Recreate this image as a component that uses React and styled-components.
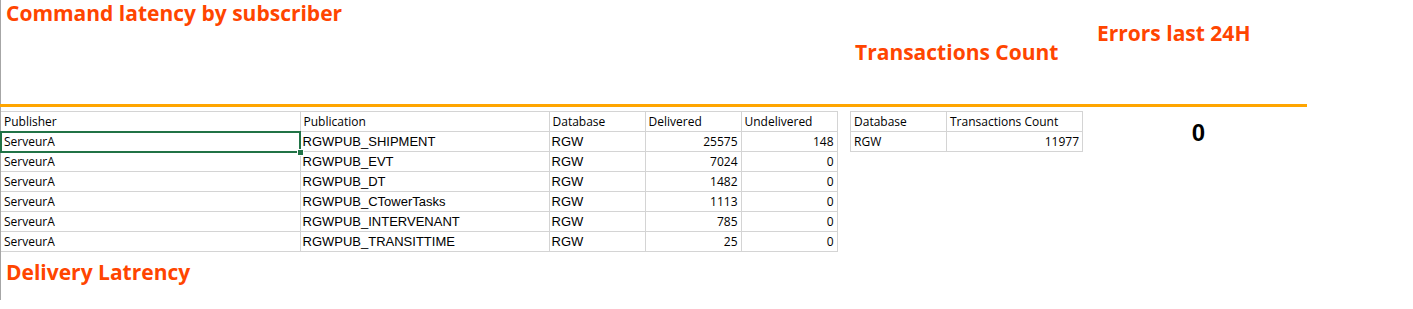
import React from 'react';
import styled, { createGlobalStyle } from 'styled-components';

const GlobalStyle = createGlobalStyle`
  body {
    margin: 0;
    background: #fff;
  }
`;

const ORANGE_RED = '#ff4500';
const GRID = '#d4d4d4';
const UI_FONT = '"Open Sans", "Noto Sans", sans-serif';
const ARIAL = '"Liberation Sans", Arial, sans-serif';

const Page = styled.div`
  width: 1306px;
  height: 300px;
  border-left: 1px solid #a6a6a6;
  display: grid;
  grid-template-columns: 849px 240px 1fr;
  grid-template-rows: 104px 3px auto;
`;

const Heading = styled.h2`
  margin: 0;
  padding: ${(p) => p.$pad || '0'};
  font-family: ${UI_FONT};
  font-weight: 700;
  font-size: 21px;
  line-height: 24px;
  color: ${ORANGE_RED};
  letter-spacing: 0;
  white-space: nowrap;
`;

const Rule = styled.div`
  grid-column: 1 / -1;
  background: #ffa500;
  margin-left: -1px;
`;

const Section = styled.div`
  padding-top: 4px;
  display: flex;
  flex-direction: column;
`;

const Sheet = styled.table`
  border-collapse: collapse;
  table-layout: fixed;
  width: ${(p) => p.$width}px;
`;

const Cell = styled.td`
  position: relative;
  height: 19px;
  padding: 0 3px 0 ${(p) => (p.$arial ? 2 : 3)}px;
  border: 1px solid ${GRID};
  border-left: ${(p) => (p.$first ? 'none' : `1px solid ${GRID}`)};
  font-family: ${(p) => (p.$arial ? ARIAL : UI_FONT)};
  font-size: ${(p) => (p.$arial ? 13 : 12)}px;
  line-height: 19px;
  color: #000;
  text-align: ${(p) => (p.$num ? 'right' : 'left')};
  vertical-align: bottom;
  white-space: nowrap;
  overflow: visible;
`;

const Selection = styled.span`
  position: absolute;
  left: -1px;
  top: -1px;
  right: -1px;
  bottom: -2px;
  border: 2px solid #217346;
  pointer-events: none;

  &::after {
    content: '';
    position: absolute;
    right: -5px;
    bottom: -5px;
    width: 5px;
    height: 5px;
    background: #217346;
    border: 1px solid #fff;
  }
`;

const ErrorValue = styled.div`
  padding-top: 8px;
  text-align: center;
  font-family: ${ARIAL};
  font-weight: 700;
  font-size: 24px;
  line-height: 28px;
  color: #000;
`;

const latency = [
  ['RGWPUB_SHIPMENT', 25575, 148],
  ['RGWPUB_EVT', 7024, 0],
  ['RGWPUB_DT', 1482, 0],
  ['RGWPUB_CTowerTasks', 1113, 0],
  ['RGWPUB_INTERVENANT', 785, 0],
  ['RGWPUB_TRANSITTIME', 25, 0],
];

function LatencyTable() {
  return (
    <Sheet $width={836}>
      <colgroup>
        <col style={{ width: 299 }} />
        <col style={{ width: 249 }} />
        <col style={{ width: 96 }} />
        <col style={{ width: 96 }} />
        <col style={{ width: 96 }} />
      </colgroup>
      <tbody>
        <tr>
          <Cell $first>Publisher</Cell>
          <Cell>Publication</Cell>
          <Cell>Database</Cell>
          <Cell>Delivered</Cell>
          <Cell>Undelivered</Cell>
        </tr>
        {latency.map(([pub, delivered, undelivered], i) => (
          <tr key={pub}>
            <Cell $first>
              ServeurA
              {i === 0 && <Selection />}
            </Cell>
            <Cell $arial>{pub}</Cell>
            <Cell $arial>RGW</Cell>
            <Cell $num>{delivered}</Cell>
            <Cell $num>{undelivered}</Cell>
          </tr>
        ))}
      </tbody>
    </Sheet>
  );
}

function TransactionsTable() {
  return (
    <Sheet $width={232}>
      <colgroup>
        <col style={{ width: 96 }} />
        <col style={{ width: 136 }} />
      </colgroup>
      <tbody>
        <tr>
          <Cell>Database</Cell>
          <Cell>Transactions Count</Cell>
        </tr>
        <tr>
          <Cell>RGW</Cell>
          <Cell $num>11977</Cell>
        </tr>
      </tbody>
    </Sheet>
  );
}

export default function App() {
  return (
    <>
      <GlobalStyle />
      <Page>
        <Heading $pad="1px 0 0 5px">Command latency by subscriber</Heading>
        <Heading $pad="40px 0 0 5px">Transactions Count</Heading>
        <Heading $pad="21px 0 0 7px">Errors last 24H</Heading>
        <Rule />
        <Section>
          <LatencyTable />
          <Heading $pad="8px 0 0 5px">Delivery Latrency</Heading>
        </Section>
        <Section>
          <TransactionsTable />
        </Section>
        <Section>
          <ErrorValue>0</ErrorValue>
        </Section>
      </Page>
    </>
  );
}
